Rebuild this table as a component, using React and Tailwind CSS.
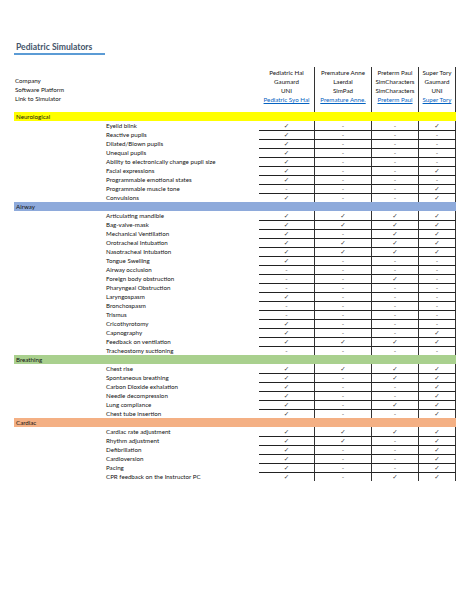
import React from "react";

const Y = "✓";
const N = "-";

const sections = [
  {
    name: "Neurological",
    band: "bg-[#ffff00]",
    rows: [
      ["Eyelid blink", Y, N, N, Y],
      ["Reactive pupils", Y, N, N, N],
      ["Dilated/Blown pupils", Y, N, N, N],
      ["Unequal pupils", Y, N, N, N],
      ["Ability to electronically change pupil size", Y, N, N, N],
      ["Facial expressions", Y, N, N, Y],
      ["Programmable emotional states", Y, N, N, N],
      ["Programmable muscle tone", N, N, N, Y],
      ["Convulsions", Y, N, N, Y],
    ],
  },
  {
    name: "Airway",
    band: "bg-[#8eaadb]",
    rows: [
      ["Articulating mandible", Y, Y, Y, Y],
      ["Bag-valve-mask", Y, Y, Y, Y],
      ["Mechanical Ventillation", Y, N, Y, Y],
      ["Orotracheal Intubation", Y, Y, Y, Y],
      ["Nasotracheal Intubation", Y, Y, Y, Y],
      ["Tongue Swelling", Y, N, N, N],
      ["Airway occlusion", N, N, N, N],
      ["Foreign body obstruction", N, N, Y, N],
      ["Pharyngeal Obstruction", N, N, N, N],
      ["Laryngospasm", Y, N, N, N],
      ["Bronchospasm", N, N, N, N],
      ["Trismus", N, N, N, N],
      ["Cricothyrotomy", Y, N, N, N],
      ["Capnography", Y, N, N, Y],
      ["Feedback on ventilation", Y, Y, Y, Y],
      ["Tracheostomy suctioning", N, N, N, N],
    ],
  },
  {
    name: "Breathing",
    band: "bg-[#a9d08e]",
    rows: [
      ["Chest rise", Y, Y, Y, Y],
      ["Spontaneous breathing", Y, N, Y, Y],
      ["Carbon Dioxide exhalation", Y, N, N, Y],
      ["Needle decompression", Y, N, N, Y],
      ["Lung compliance", Y, N, Y, Y],
      ["Chest tube insertion", Y, N, N, Y],
    ],
  },
  {
    name: "Cardiac",
    band: "bg-[#f4b084]",
    rows: [
      ["Cardiac rate adjustment", Y, Y, Y, Y],
      ["Rhythm adjustment", Y, Y, N, Y],
      ["Defibrillation", Y, N, N, Y],
      ["Cardioversion", Y, N, N, Y],
      ["Pacing", Y, N, N, Y],
      ["CPR feedback on the Instructor PC", Y, N, Y, Y],
    ],
  },
];

const simulators = [
  ["Pediatric Hal", "Gaumard", "UNI", "Pediatric Syo Hal"],
  ["Premature Anne", "Laerdal", "SimPad", "Premature Anne."],
  ["Preterm Paul", "SimCharacters", "SimCharacters", "Preterm Paul"],
  ["Super Tory", "Gaumard", "UNI", "Super Tory"],
];

const grid = "grid grid-cols-[92px_153px_56px_57px_47px_37px]";

function Mark({ value }) {
  if (value === Y) {
    return (
      <span className="text-[6.5px] leading-[8px] text-[#333] [font-family:'DejaVu_Sans',sans-serif]">
        ✓
      </span>
    );
  }
  return <span className="text-[6.5px] leading-[8px] text-[#444]">-</span>;
}

export default function App() {
  return (
    <div className="h-[613px] w-[474px] bg-white pl-[14px] pt-[42px] text-[6.2px] text-[#111] [font-family:Lato,'Liberation_Sans',sans-serif]">
      {/* TITLE */}
      <div className="w-[91px] border-b-2 border-[#5b9bd5] pl-[2px] text-[8.6px] leading-[11px] font-bold text-[#44546a]">
        Pediatric Simulators
      </div>

      {/* HEADER */}
      <div className={`${grid} mt-[12px] h-[45px]`}>
        <div className="col-span-2 flex flex-col justify-end pb-[9px] pl-[1px] leading-[9px]">
          <span>Company</span>
          <span>Software Platform</span>
          <span>Link to Simulator</span>
        </div>
        {simulators.map((sim) => (
          <div
            key={sim[0]}
            className="flex flex-col items-center justify-end border-r border-[#333] pb-[8px] leading-[9px]"
          >
            <span>{sim[0]}</span>
            <span>{sim[1]}</span>
            <span>{sim[2]}</span>
            <span className="text-[#0563c1] underline">{sim[3]}</span>
          </div>
        ))}
      </div>

      {/* SECTIONS */}
      {sections.map((section) => (
        <div key={section.name}>
          <div className={`h-[9px] w-[442px] pl-[2px] leading-[9px] ${section.band}`}>
            {section.name}
          </div>

          {section.rows.map((row, index) => (
            <div key={row[0]} className={`${grid} h-[9px]`}>
              <div />
              <div className="leading-[9px]">{row[0]}</div>
              {row.slice(1).map((value, col) => (
                <div
                  key={col}
                  className={`flex items-center justify-center border-r border-[#333] ${
                    index > 0 ? "border-t border-t-[#222]" : ""
                  }`}
                >
                  <Mark value={value} />
                </div>
              ))}
            </div>
          ))}
        </div>
      ))}
    </div>
  );
}
